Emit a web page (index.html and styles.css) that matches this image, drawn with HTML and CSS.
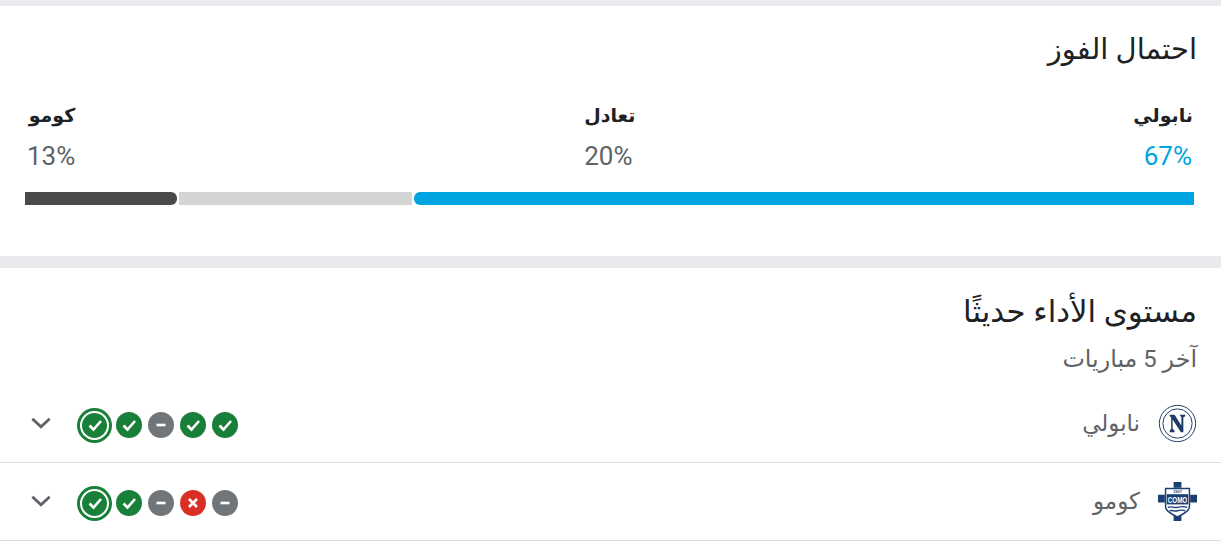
FILE: index.html
```html
<!DOCTYPE html>
<html lang="ar" dir="rtl">
<head>
    <meta charset="UTF-8">
    <meta name="viewport" content="width=device-width, initial-scale=1.0">
    <title>احتمال الفوز</title>
    <link rel="stylesheet" href="styles.css">
</head>
<body>
    <section class="card odds">
        <h2 class="card-title">احتمال الفوز</h2>
        <div class="odds-labels">
            <div class="odds-item">
                <div class="odds-name">نابولي</div>
                <div class="odds-pct home">67%</div>
            </div>
            <div class="odds-item odds-mid">
                <div class="odds-name">تعادل</div>
                <div class="odds-pct">20%</div>
            </div>
            <div class="odds-item">
                <div class="odds-name">كومو</div>
                <div class="odds-pct">13%</div>
            </div>
        </div>
        <div class="odds-bar">
            <div class="seg seg-home"></div>
            <div class="seg seg-draw"></div>
            <div class="seg seg-away"></div>
        </div>
    </section>

    <section class="card form">
        <h2 class="card-title">مستوى الأداء حديثًا</h2>
        <p class="card-sub">آخر 5 مباريات</p>

        <div class="team-row">
            <svg class="crest" viewBox="0 0 40 40">
                <circle cx="20" cy="20" r="18.6" fill="#fff" stroke="#1f3a68" stroke-width="1"/>
                <circle cx="20" cy="20" r="15" fill="#fff" stroke="#1f3a68" stroke-width="1"/>
                <path d="M12 11h5l7 11V13.500L22 11h6v1.500l-2 1V29h-2.500L15 16v9.500l2 2V29h-5v-1.500l1.500-2V13.500L12 12.500z" fill="#1f3a68"/>
            </svg>
            <span class="team-name">نابولي</span>
            <div class="results">
                <span class="dot win"><svg viewBox="0 0 24 24"><path d="M6.500 12.500l4 4 7.500-8.500"/></svg></span>
                <span class="dot win"><svg viewBox="0 0 24 24"><path d="M6.500 12.500l4 4 7.500-8.500"/></svg></span>
                <span class="dot draw"><svg viewBox="0 0 24 24"><path d="M7.500 12h9"/></svg></span>
                <span class="dot win"><svg viewBox="0 0 24 24"><path d="M6.500 12.500l4 4 7.500-8.500"/></svg></span>
                <span class="dot win latest"><svg viewBox="0 0 24 24"><path d="M6.500 12.500l4 4 7.500-8.500"/></svg></span>
            </div>
            <svg class="chevron" viewBox="0 0 24 24"><path d="M4 8l8 7.500L20 8"/></svg>
        </div>

        <div class="team-row">
            <svg class="crest" viewBox="0 0 40 40">
                <path d="M16 0h8v6h-8zM0 13h7v8H0zM33 13h7v8h-7zM16 34h8v6h-8z" fill="#1c3f73"/>
                <path d="M7 6h26v19c0 6-8 9-13 12C15 34 7 31 7 25z" fill="#1c3f73"/>
                <path d="M8.500 7.500h23V25c0 4.500-7 7.500-11.500 10C15.500 32.500 8.500 29.500 8.500 25z" fill="#fff"/>
                <rect x="9" y="12.500" width="22" height="10.500" fill="#1c3f73"/>
                <path d="M10 26c3-1.500 6 1 10 0s6-1.500 10 0M12 29.500c3-1 5 1 8 0s5-1 8 0" fill="none" stroke="#1c3f73" stroke-width="1.400"/>
                <text class="crest-year" x="20" y="11.500" text-anchor="middle" direction="ltr">1907</text>
                <text class="crest-como" x="20" y="21.500" text-anchor="middle" direction="ltr" textLength="20" lengthAdjust="spacingAndGlyphs">COMO</text>
            </svg>
            <span class="team-name">كومو</span>
            <div class="results">
                <span class="dot draw"><svg viewBox="0 0 24 24"><path d="M7.500 12h9"/></svg></span>
                <span class="dot loss"><svg viewBox="0 0 24 24"><path d="M8 8l8 8M16 8l-8 8"/></svg></span>
                <span class="dot draw"><svg viewBox="0 0 24 24"><path d="M7.500 12h9"/></svg></span>
                <span class="dot win"><svg viewBox="0 0 24 24"><path d="M6.500 12.500l4 4 7.500-8.500"/></svg></span>
                <span class="dot win latest"><svg viewBox="0 0 24 24"><path d="M6.500 12.500l4 4 7.500-8.500"/></svg></span>
            </div>
            <svg class="chevron" viewBox="0 0 24 24"><path d="M4 8l8 7.500L20 8"/></svg>
        </div>
    </section>
</body>
</html>
```

FILE: styles.css
```css
:root {
    --band: #e8eaed;
    --line: #dadce0;
    --blue: #00a4e0;
    --green: #188038;
    --grey: #70757a;
    --red: #d93025;
}
body {
    margin: 0;
    background: var(--band);
    font-family: Roboto, "DejaVu Sans", sans-serif;
    color: #202124;
    overflow: hidden;
}
.card {
    background: #fff;
    padding: 0 24px 0 25px;
}
.odds {
    margin-top: 6px;
    height: 250px;
    padding-top: 1px;
    padding-right: 27px;
    box-sizing: border-box;
}
.form {
    margin-top: 12px;
    height: 273px;
    padding-top: 1px;
    box-sizing: border-box;
}
.card-title {
    margin: 25px 0 0;
    font-size: 29px;
    line-height: 34px;
    font-weight: 400;
}
.odds .card-title {
    margin-right: -3px;
}
.odds-labels {
    display: flex;
    justify-content: space-between;
    margin-top: 32px;
}
.odds-item {
    padding: 0 1px 0 2px;
}
.odds-mid {
    text-align: left;
    margin-right: -11px;
}
.odds-name {
    font-size: 19px;
    line-height: 36px;
    font-weight: 700;
}
.odds-pct {
    font-size: 26px;
    line-height: 44px;
    color: #5f6368;
}
.odds-pct.home {
    color: var(--blue);
    padding-right: 1px;
}
.odds-bar {
    display: flex;
    gap: 2px;
    height: 13px;
    margin-top: 14px;
}
.seg-home {
    flex: 780;
    background: var(--blue);
    border-radius: 6px 0 0 6px;
    width: 0;
}
.seg-draw {
    flex: 233;
    background: #d4d4d4;
}
.seg-away {
    flex: 152;
    background: #4a4a4a;
    border-radius: 0 6px 6px 0;
}
.form .card-title {
    margin-top: 26px;
    font-size: 30.800px;
}
.card-sub {
    margin: 15px 0 0;
    font-size: 23.800px;
    line-height: 30px;
    color: #5f6368;
}
.team-row {
    display: flex;
    align-items: center;
    height: 78px;
    margin: 0 -24px 0 -25px;
    padding: 0 24px 0 28px;
    border-bottom: 1px solid var(--line);
    box-sizing: border-box;
}
.team-row:first-of-type {
    margin-top: 11px;
}
.crest {
    width: 39px;
    height: 39px;
    flex: none;
}
.crest-como {
    font-family: "Liberation Sans", sans-serif;
    font-size: 9.500px;
    font-weight: 700;
    fill: #fff;
}
.crest-year {
    font-family: "Liberation Sans", sans-serif;
    font-size: 4px;
    font-weight: 700;
    fill: #1c3f73;
}
.team-name {
    margin-right: 18px;
    font-size: 23px;
    color: #5f6368;
    flex: 1;
}
.results {
    display: flex;
    align-items: center;
    gap: 6px;
    margin-top: 3px;
}
.dot {
    width: 26px;
    height: 26px;
    border-radius: 50%;
    display: flex;
    align-items: center;
    justify-content: center;
    position: relative;
}
.dot svg {
    width: 24px;
    height: 24px;
    fill: none;
    stroke: #fff;
    stroke-width: 2.600;
}
.win { background: var(--green); }
.draw { background: var(--grey); }
.loss { background: var(--red); }
.latest {
    width: 35px;
    height: 35px;
    margin-right: -2px;
}
.latest::after {
    content: "";
    position: absolute;
    inset: 3px;
    border: 2px solid #fff;
    border-radius: 50%;
}
.chevron {
    width: 26px;
    height: 26px;
    margin-right: 23px;
    margin-top: -2px;
    fill: none;
    stroke: #5f6368;
    stroke-width: 2.600;
}
```
